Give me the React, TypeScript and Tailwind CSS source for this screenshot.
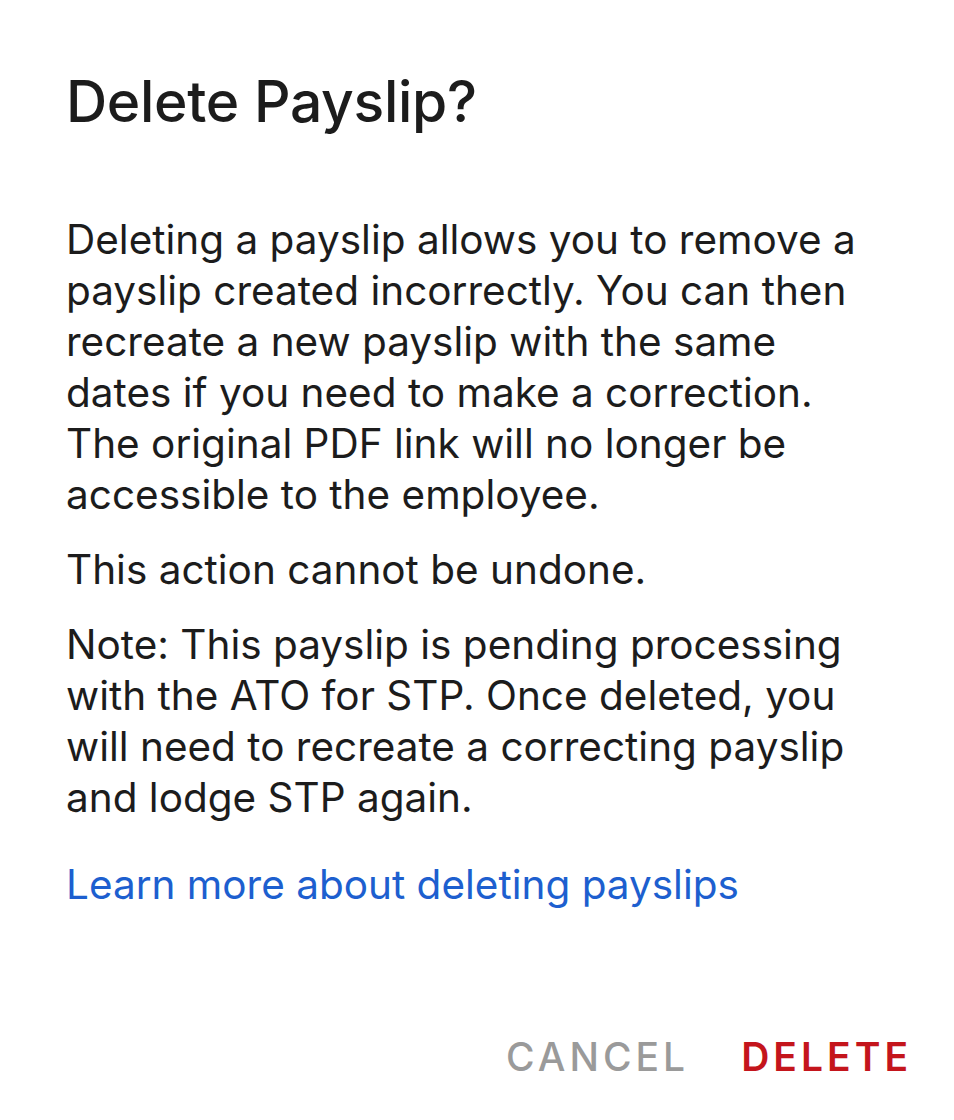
import React from "react";

const paragraphs = [
  "Deleting a payslip allows you to remove a payslip created incorrectly. You can then recreate a new payslip with the same dates if you need to make a correction. The original PDF link will no longer be accessible to the employee.",
  "This action cannot be undone.",
  "Note: This payslip is pending processing with the ATO for STP. Once deleted, you will need to recreate a correcting payslip and lodge STP again.",
];

export default function App() {
  return (
    <div
      className="w-[954px] h-[1120px] bg-white flex flex-col text-[#1c1c1c]"
      style={{ fontFamily: "Inter, 'Noto Sans', sans-serif" }}
    >
      <div className="pl-[66px] pr-[78px] pt-[66px] flex flex-col">
        <h1 className="text-[57px] leading-[72px] font-medium tracking-[-0.3px]">
          Delete Payslip?
        </h1>

        <div className="mt-[76px] flex flex-col gap-[24px]">
          {paragraphs.map((p, i) => (
            <p key={i} className="text-[40.5px] leading-[51px]">
              {p}
            </p>
          ))}
        </div>

        <a href="#" className="mt-[36px] text-[40.5px] leading-[51px] text-[#1d5fcf]">
          Learn more about deleting payslips
        </a>
      </div>

      {/* Actions */}
      <div className="mt-auto mb-[38px] flex justify-end gap-[52px] pr-[42px]">
        <button className="text-[39px] leading-[51px] tracking-[4px] text-[#9a9a9a] font-medium">
          CANCEL
        </button>
        <button className="text-[39px] leading-[51px] tracking-[4px] text-[#c4151c] font-semibold">
          DELETE
        </button>
      </div>
    </div>
  );
}
